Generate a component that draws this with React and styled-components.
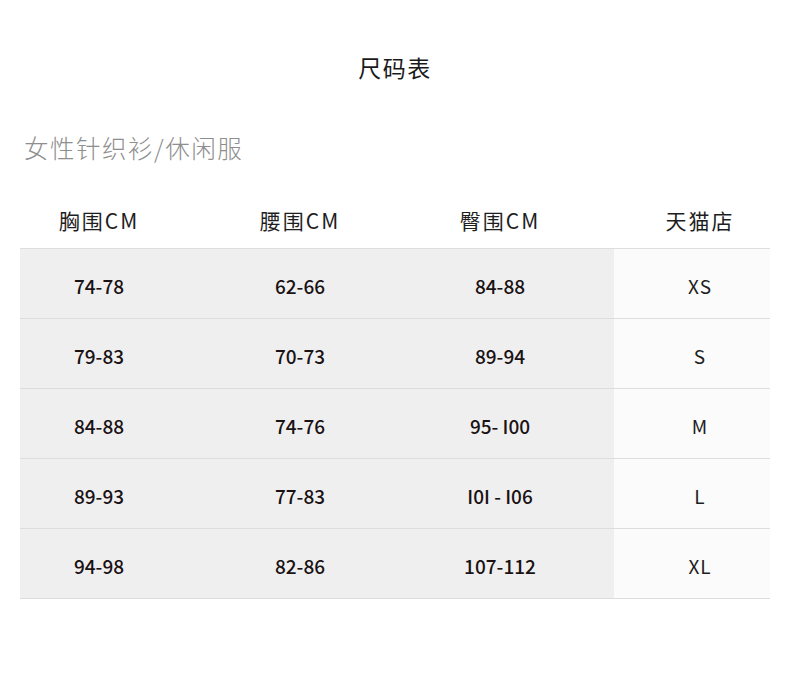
import React from "react";
import styled, { createGlobalStyle } from "styled-components";

const Global = createGlobalStyle`
  html, body { margin: 0; padding: 0; background: #ffffff; }
  body { font-family: "Noto Sans CJK SC", "Noto Sans", sans-serif; }
`;

const Page = styled.div`
  width: 790px;
  height: 688px;
  padding: 51px 20px 0;
  box-sizing: border-box;
  background: #fff;
`;

const Title = styled.h1`
  margin: 0;
  text-align: center;
  font-size: 23px;
  line-height: 32px;
  font-weight: 400;
  color: #1a1a1a;
  letter-spacing: 1.5px;
`;

const Subtitle = styled.h2`
  margin: 49px 0 0 4px;
  font-size: 24.5px;
  line-height: 32px;
  font-weight: 300;
  color: #8e8e8e;
  letter-spacing: 1.5px;
`;

const Table = styled.div`
  margin-top: 33px;
  display: grid;
  grid-template-columns: 158px 244px 192px 156px;
`;

const Head = styled.div`
  height: 52px;
  padding-bottom: 5px;
  box-sizing: border-box;
  display: flex;
  align-items: center;
  justify-content: center;
  font-size: 21px;
  letter-spacing: 2px;
  color: #1e1e1e;
  border-bottom: 1px solid #dedede;
  padding-right: ${(p) => p.$pr || 0}px;
  padding-left: ${(p) => p.$pl || 0}px;
`;

const Cell = styled.div`
  height: 70px;
  box-sizing: border-box;
  padding-top: 4px;
  display: flex;
  align-items: center;
  justify-content: center;
  background: ${(p) => (p.$light ? "#fbfbfb" : "#efefef")};
  border-bottom: 1px solid #dddddd;
  font-size: 19px;
  font-weight: ${(p) => (p.$light ? 400 : 500)};
  color: ${(p) => (p.$light ? "#1e1e1e" : "#1a1214")};
  letter-spacing: ${(p) => (p.$light ? "1px" : "0")};
  padding-right: ${(p) => p.$pr || 0}px;
  padding-left: ${(p) => p.$pl || 0}px;
`;

const rows = [
  ["74-78", "62-66", "84-88", "XS"],
  ["79-83", "70-73", "89-94", "S"],
  ["84-88", "74-76", "95- I00", "M"],
  ["89-93", "77-83", "I0I - I06", "L"],
  ["94-98", "82-86", "107-112", "XL"],
];

export default function App() {
  return (
    <Page>
      <Global />
      <Title>尺码表</Title>
      <Subtitle>女性针织衫/休闲服</Subtitle>
      <Table>
        <Head>胸围CM</Head>
        <Head>腰围CM</Head>
        <Head $pr={36}>臀围CM</Head>
        <Head $pl={16}>天猫店</Head>
        {rows.map((r, i) => (
          <React.Fragment key={i}>
            <Cell>{r[0]}</Cell>
            <Cell>{r[1]}</Cell>
            <Cell $pr={36}>{r[2]}</Cell>
            <Cell $light $pl={16}>{r[3]}</Cell>
          </React.Fragment>
        ))}
      </Table>
    </Page>
  );
}
